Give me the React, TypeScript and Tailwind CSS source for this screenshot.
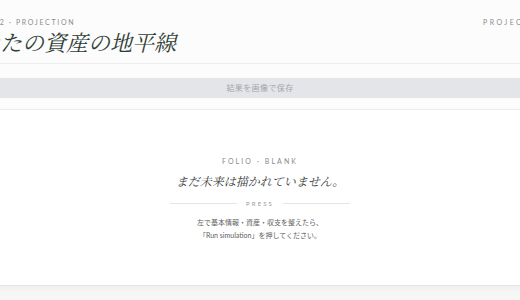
import React from "react";

const serif = { fontFamily: '"Noto Serif CJK JP", "Liberation Serif", "Noto Sans CJK JP", serif' };

export default function App() {
  return (
    <div className="w-[520px] h-[300px] overflow-hidden bg-[#f6f6f5]">
      <div className="ml-[-44px] w-[608px] font-['Lato','Noto_Sans_CJK_JP',sans-serif]">
        {/* header */}
        <header className="h-[64px] border-b border-[#ececec] bg-[#fcfcfc] flex items-start justify-between pl-[38px] pr-[14px] pt-[18px]">
          <div>
            <p className="text-[7px] leading-[9px] tracking-[0.24em] text-[#8d8d8d]">02 · PROJECTION</p>
            <h1 className="mt-[2px] ml-[-38px] text-[22px] leading-[26px] italic text-[#2f3e36]" style={serif}>
              あなたの資産の地平線
            </h1>
          </div>
          <p className="text-[7px] leading-[9px] tracking-[0.35em] text-[#8d8d8d]">PROJECTION</p>
        </header>

        <div className="bg-[#fcfcfc] pt-[14px] pb-[11px] border-b border-[#eeeeee]">
          <div className="w-full h-[20px] bg-[#e4e5e8] text-[8px] leading-[20px] text-center text-[#a3a6ad] tracking-[0.05em]">
            結果を画像で保存
          </div>
        </div>

        {/* card */}
        <section className="bg-white h-[176px] border-b border-[#e6e6e6] shadow-[0_2px_6px_rgba(0,0,0,0.04)] flex flex-col items-center pt-[47px]">
          <p className="text-[7px] leading-[9px] tracking-[0.3em] text-[#8a8a8a]">FOLIO · BLANK</p>
          <h2 className="mt-[7px] text-[12px] leading-[16px] italic text-[#3a3a3a]" style={serif}>
            まだ未来は描かれていません。
          </h2>
          <div className="mt-[10px] flex items-center gap-[9px]">
            <span className="w-[67px] h-px bg-[#e6e6dc]" />
            <span className="text-[6px] leading-[9px] tracking-[0.35em] text-[#9a9a9a]">PRESS</span>
            <span className="w-[67px] h-px bg-[#e6e6dc]" />
          </div>
          <p className="mt-[8px] text-[7px] leading-[13px] text-[#606060] text-center">
            左で基本情報・資産・収支を整えたら、
            <br />
            「Run simulation」を押してください。
          </p>
        </section>
      </div>
    </div>
  );
}
